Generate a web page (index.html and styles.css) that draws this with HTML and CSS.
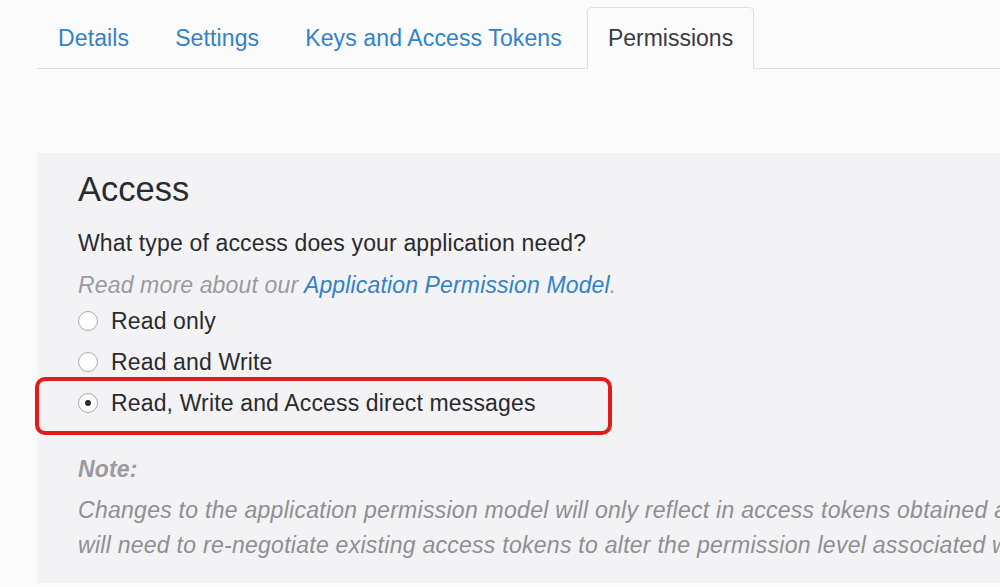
FILE: index.html
```html
<!DOCTYPE html>
<html lang="en">
<head>
<meta charset="utf-8">
<title>Permissions</title>
<link rel="stylesheet" href="styles.css">
</head>
<body>
<div class="page">
  <ul class="tabs">
    <li class="tab"><a href="#">Details</a></li>
    <li class="tab"><a href="#">Settings</a></li>
    <li class="tab"><a href="#">Keys and Access Tokens</a></li>
    <li class="tab active"><a href="#">Permissions</a></li>
  </ul>

  <section class="panel">
    <h2 class="title">Access</h2>
    <p class="question">What type of access does your application need?</p>
    <p class="hint">Read more about our <a href="#">Application Permission Model</a>.</p>
    <ul class="options">
      <li class="option"><span class="radio"></span><span class="label">Read only</span></li>
      <li class="option"><span class="radio"></span><span class="label">Read and Write</span></li>
      <li class="option highlight"><span class="radio checked"></span><span class="label">Read, Write and Access direct messages</span></li>
    </ul>
    <p class="note-title">Note:</p>
    <p class="note">Changes to the application permission model will only reflect in access tokens obtained after the permission model change is saved. You<br>will need to re-negotiate existing access tokens to alter the permission level associated with each of your application's users.</p>
  </section>
</div>
</body>
</html>
```

FILE: styles.css
```css
html, body {
  margin: 0;
  padding: 0;
  overflow: hidden;
  background: #fbfbfc;
  font-family: "Liberation Sans", Arial, sans-serif;
  color: #292f33;
}

.page {
  padding: 7px 0 0 37px;
}

.tabs {
  list-style: none;
  margin: 0;
  padding: 0;
  display: flex;
  gap: 4px;
  border-bottom: 1px solid #dedee2;
}

.tab {
  margin-bottom: -1px;
  border: 1px solid transparent;
  border-radius: 5px 5px 0 0;
}

.tab a {
  display: block;
  padding: 0 20px;
  height: 60px;
  line-height: 60px;
  font-size: 23px;
  letter-spacing: 0.12px;
  color: #3282c8;
  text-decoration: none;
  white-space: nowrap;
}

.tab.active {
  border-color: #dedee2;
  border-bottom-color: #fbfbfc;
  background: #fbfbfc;
}

.tab.active a {
  color: #3a3a3c;
  letter-spacing: 0;
}

.panel {
  margin-top: 84px;
  background: #f3f3f5;
  padding: 16px 0 20px 41px;
  position: relative;
  letter-spacing: 0.15px;
}

.title {
  margin: 0;
  font-size: 34.5px;
  line-height: 40px;
  font-weight: normal;
  letter-spacing: 0;
  color: #2a2b2e;
}

.question {
  margin: 13px 0 0;
  font-size: 23px;
  line-height: 42px;
  color: #2a2b2e;
}

.hint {
  margin: 3px 0 0;
  font-size: 23px;
  line-height: 36px;
  font-style: italic;
  color: #9a9a9f;
}

.hint a {
  color: #3282c8;
  text-decoration: none;
}

.options {
  list-style: none;
  margin: -2.5px 0 0;
  padding: 0;
}

.option {
  display: flex;
  align-items: center;
  height: 41px;
  font-size: 23px;
  color: #2a2b2e;
  position: relative;
}

.radio {
  width: 20px;
  height: 20px;
  box-sizing: border-box;
  border: 1px solid #a9a9ad;
  border-radius: 50%;
  background: #ffffff;
  margin-right: 13px;
  display: flex;
  align-items: center;
  justify-content: center;
  flex: none;
}

.radio.checked::before {
  content: "";
  width: 6px;
  height: 6px;
  border-radius: 50%;
  background: #2a2b2e;
}

.highlight::after {
  content: "";
  position: absolute;
  left: -43px;
  top: -6px;
  width: 577px;
  height: 58px;
  box-sizing: border-box;
  border: 4px solid #e11d1a;
  border-radius: 10px;
}

.note-title {
  margin: 27px 0 0;
  font-size: 23px;
  line-height: 36px;
  font-style: italic;
  font-weight: bold;
  color: #9a9a9f;
}

.note {
  margin: 6.5px 0 0;
  font-size: 23px;
  line-height: 35px;
  font-style: italic;
  letter-spacing: 0.27px;
  color: #8e8e93;
  white-space: nowrap;
}
```
